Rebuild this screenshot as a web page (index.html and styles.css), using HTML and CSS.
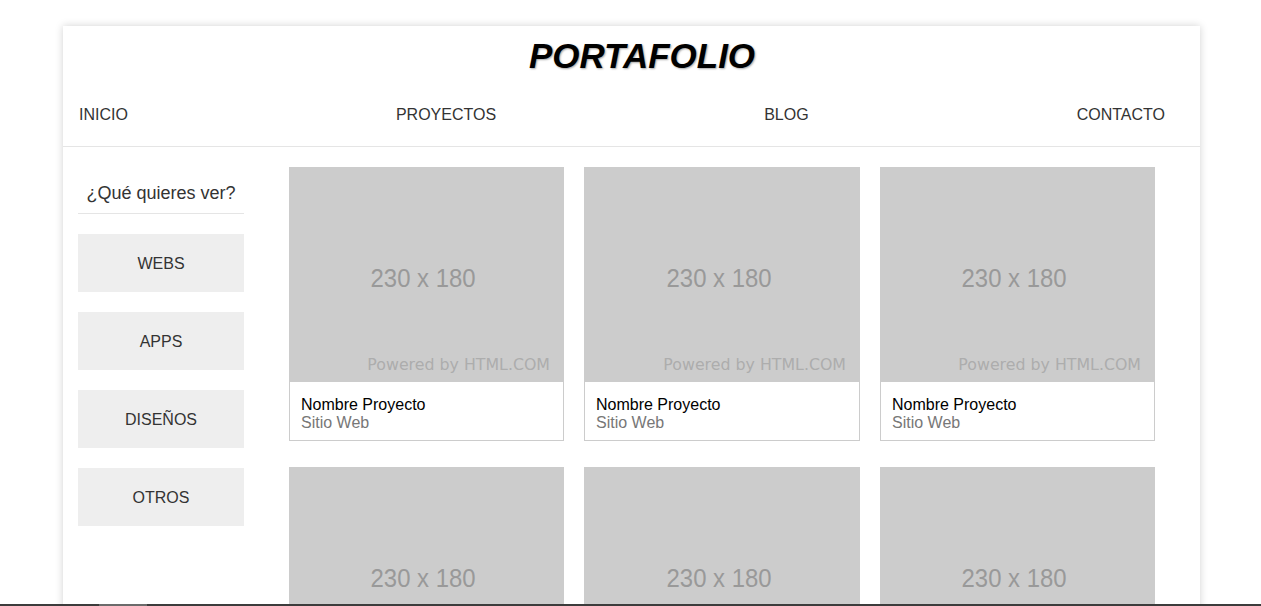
FILE: index.html
```html
<!DOCTYPE html>
<html lang="es">
<head>
<meta charset="utf-8">
<title>Portafolio</title>
<link rel="stylesheet" href="styles.css">
</head>
<body>
<div class="page">
  <header class="header">
    <h1 class="title">PORTAFOLIO</h1>
    <nav class="nav">
      <a class="nav-link" href="#">INICIO</a>
      <a class="nav-link" href="#">PROYECTOS</a>
      <a class="nav-link" href="#">BLOG</a>
      <a class="nav-link" href="#">CONTACTO</a>
    </nav>
  </header>
  <main class="main">
    <aside class="sidebar">
      <h2 class="side-title">¿Qué quieres ver?</h2>
      <a class="side-btn" href="#">WEBS</a>
      <a class="side-btn" href="#">APPS</a>
      <a class="side-btn" href="#">DISEÑOS</a>
      <a class="side-btn" href="#">OTROS</a>
    </aside>
    <section class="grid">
      <article class="card">
        <div class="thumb"><span class="thumb-size">230 x 180</span><span class="thumb-powered">Powered by HTML.COM</span></div>
        <div class="caption"><div class="cap-name">Nombre Proyecto</div><div class="cap-type">Sitio Web</div></div>
      </article>
      <article class="card">
        <div class="thumb"><span class="thumb-size">230 x 180</span><span class="thumb-powered">Powered by HTML.COM</span></div>
        <div class="caption"><div class="cap-name">Nombre Proyecto</div><div class="cap-type">Sitio Web</div></div>
      </article>
      <article class="card">
        <div class="thumb"><span class="thumb-size">230 x 180</span><span class="thumb-powered">Powered by HTML.COM</span></div>
        <div class="caption"><div class="cap-name">Nombre Proyecto</div><div class="cap-type">Sitio Web</div></div>
      </article>
      <article class="card">
        <div class="thumb"><span class="thumb-size">230 x 180</span><span class="thumb-powered">Powered by HTML.COM</span></div>
        <div class="caption"><div class="cap-name">Nombre Proyecto</div><div class="cap-type">Sitio Web</div></div>
      </article>
      <article class="card">
        <div class="thumb"><span class="thumb-size">230 x 180</span><span class="thumb-powered">Powered by HTML.COM</span></div>
        <div class="caption"><div class="cap-name">Nombre Proyecto</div><div class="cap-type">Sitio Web</div></div>
      </article>
      <article class="card">
        <div class="thumb"><span class="thumb-size">230 x 180</span><span class="thumb-powered">Powered by HTML.COM</span></div>
        <div class="caption"><div class="cap-name">Nombre Proyecto</div><div class="cap-type">Sitio Web</div></div>
      </article>
    </section>
  </main>
</div>
<div class="hscroll"><div class="hscroll-thumb"></div></div>
</body>
</html>
```
FILE: styles.css
```css
* { box-sizing: border-box; }
html, body { margin: 0; padding: 0; background: #fff; }
body {
  font-family: "Liberation Sans", Arial, sans-serif;
  color: #333;
}
.page {
  width: 1137px;
  margin: 26px 0 0 63px;
  background: #fff;
  box-shadow: 0 0 8px rgba(0, 0, 0, 0.18);
  min-height: 700px;
}
.header {
  border-bottom: 1px solid #e5e5e5;
}
.title {
  margin: 0;
  padding: 10px 0 0 21px;
  text-align: center;
  font-size: 35px;
  line-height: 40px;
  font-weight: bold;
  font-style: italic;
  color: #000;
  text-shadow: 1px 1px 2px rgba(0, 0, 0, 0.35);
}
.nav {
  display: flex;
  justify-content: space-between;
  padding: 30px 35px 22px 16px;
}
.nav-link {
  font-size: 16px;
  line-height: 18px;
  color: #333;
  text-decoration: none;
}
.main {
  display: flex;
  align-items: flex-start;
  gap: 45px;
  padding: 20px 0 0 15px;
}
.sidebar {
  width: 166px;
  flex: none;
  display: flex;
  flex-direction: column;
}
.side-title {
  margin: 0 0 20px;
  padding: 16px 0 10px;
  font-size: 18px;
  line-height: 20px;
  font-weight: normal;
  text-align: center;
  color: #333;
  border-bottom: 1px solid #e5e5e5;
}
.side-btn {
  display: block;
  height: 58px;
  padding-top: 1px;
  line-height: 57px;
  margin-bottom: 20px;
  background: #eee;
  color: #333;
  text-align: center;
  font-size: 16px;
  text-decoration: none;
}
.grid {
  display: grid;
  grid-template-columns: 275px 276px 275px;
  column-gap: 20px;
  row-gap: 26px;
}
.thumb {
  position: relative;
  height: 215px;
  background: #ccc;
  display: flex;
  align-items: center;
  justify-content: center;
}
.thumb-size {
  font-size: 26px;
  color: #999;
  transform: scaleX(0.92);
  margin: 7px 6px 0 0;
}
.thumb-powered {
  position: absolute;
  right: 14px;
  bottom: 8px;
  font-family: "DejaVu Sans", sans-serif;
  font-size: 15.8px;
  color: #adadad;
  line-height: 18px;
}
.caption {
  border: 1px solid #ccc;
  border-top: none;
  padding: 14px 11px 8px;
  font-size: 16px;
  line-height: 18px;
}
.cap-name { color: #000; }
.cap-type { color: #777; }
.hscroll {
  position: fixed;
  left: 0;
  right: 0;
  bottom: 0;
  height: 2px;
  background: #3c3c3c;
}
.hscroll-thumb {
  margin-left: 99px;
  width: 48px;
  height: 2px;
  background: #6b6b6b;
}
```
